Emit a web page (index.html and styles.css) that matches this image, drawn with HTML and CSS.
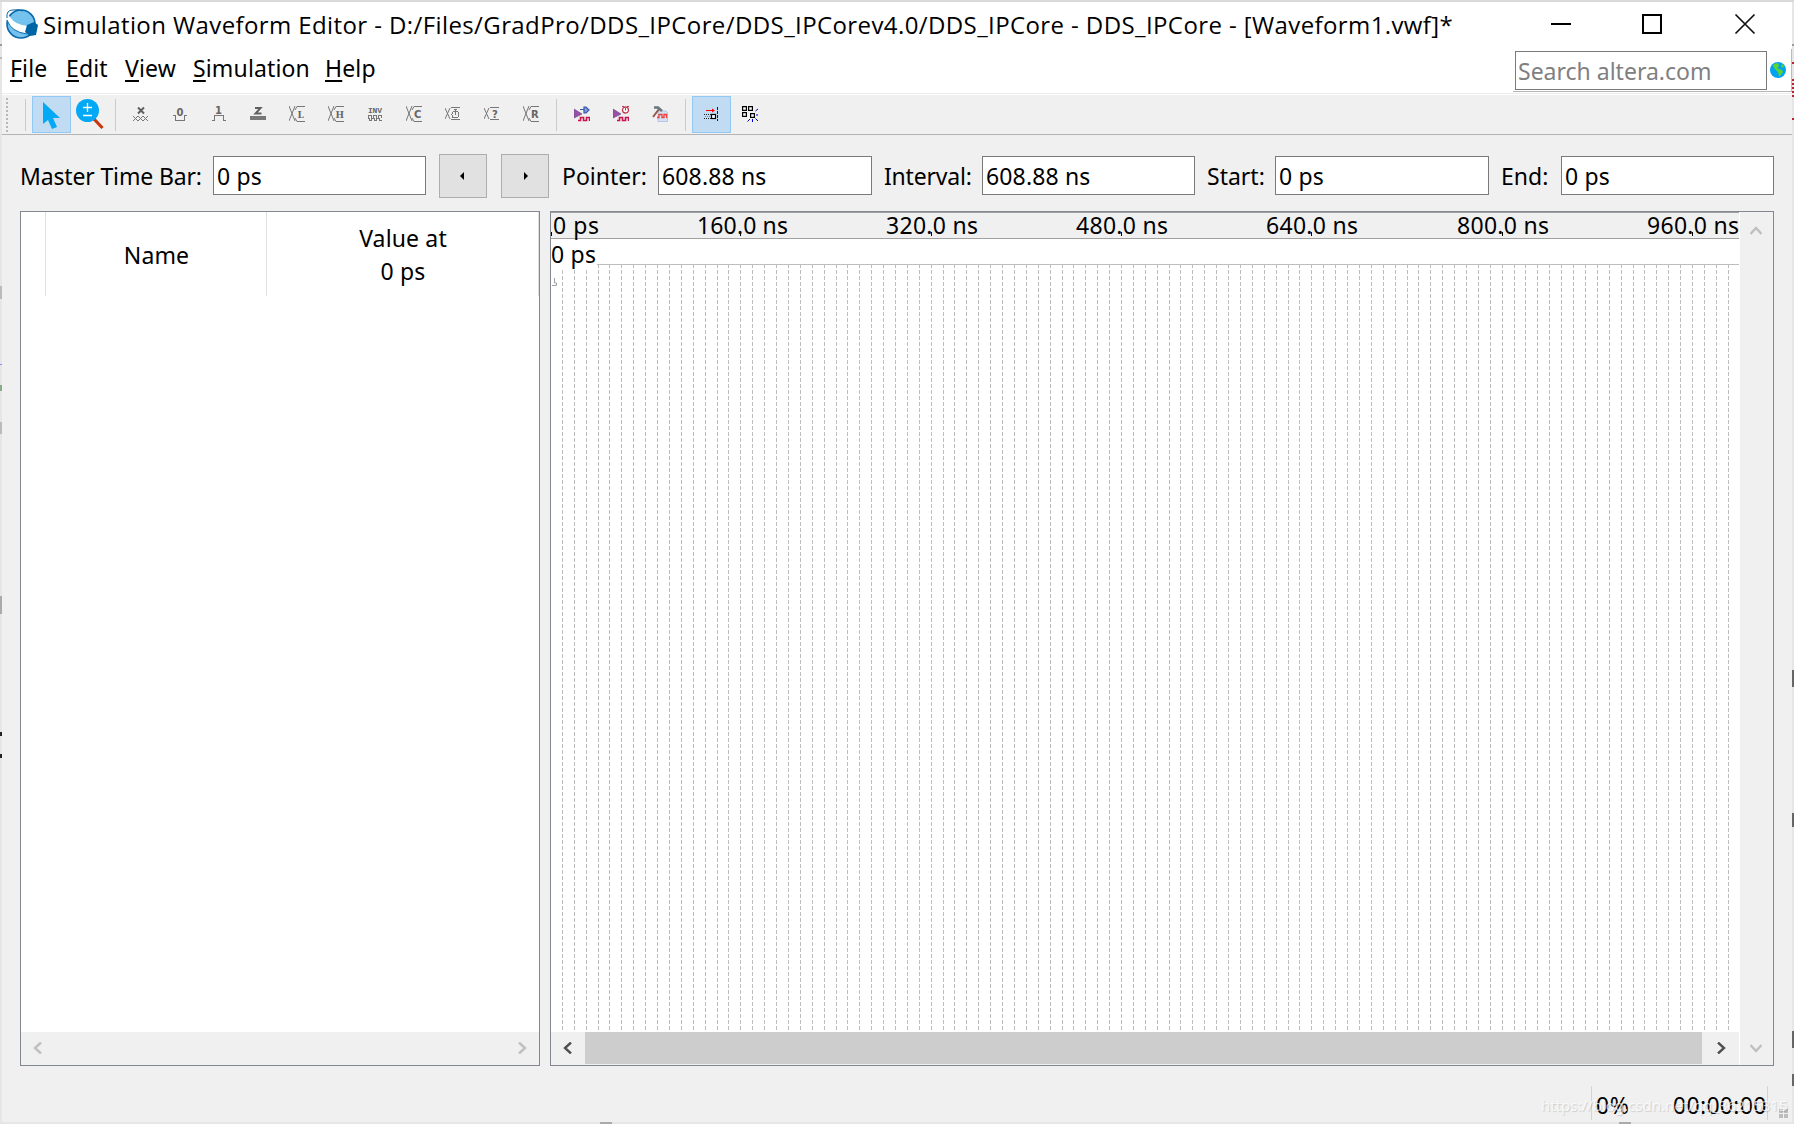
FILE: index.html
```
<!DOCTYPE html>
<html>
<head>
  <title>Simulation Waveform Editor</title>
  <meta charset="utf-8" />
  <link rel="stylesheet" href="styles.css">
</head>
<body>
  <div class="window">

    <div class="titlebar">
      <svg class="logo" width="34" height="32" viewBox="0 0 34 32">
        <circle cx="16" cy="16" r="14" fill="#74c3ee" stroke="#0a68a8" stroke-width="1.6"/>
        <path d="M4 3 Q2 6 5 9 Q10 17 23 18 L22 26 Q6 24 2 12 Q0 5 4 3Z" fill="#fff"/>
        <path d="M2 10 Q1 2 8 2 Q13 1 18 3" fill="none" stroke="#0a68a8" stroke-width="1"/>
        <path d="M2 12 Q6 24 22 26" fill="none" stroke="#0a68a8" stroke-width="1"/>
        <path d="M22 17 L29 14 L33 17 L31 27 L25 28 L20 24Z" fill="#0065a4"/>
      </svg>
      <span class="title">Simulation Waveform Editor - D:/Files/GradPro/DDS_IPCore/DDS_IPCorev4.0/DDS_IPCore - DDS_IPCore - [Waveform1.vwf]*</span>
      <svg class="controls" width="206" height="22" viewBox="0 0 206 22">
        <path d="M0 11H20" stroke="#000" stroke-width="2" shape-rendering="crispEdges"/>
        <rect x="92" y="2" width="18" height="18" fill="none" stroke="#000" stroke-width="2"/>
        <path d="M184.500 1.500L203.500 20.500M203.500 1.500L184.500 20.500" stroke="#111" stroke-width="1.700"/>
      </svg>
    </div>

    <div class="menubar">
      <span class="menu m-file"><u>F</u>ile</span>
      <span class="menu m-edit"><u>E</u>dit</span>
      <span class="menu m-view"><u>V</u>iew</span>
      <span class="menu m-sim"><u>S</u>imulation</span>
      <span class="menu m-help"><u>H</u>elp</span>
      <div class="search-area">
        <div class="search">Search altera.com</div>
        <svg width="16" height="16" viewBox="0 0 16 16">
          <circle cx="8" cy="8" r="8" fill="#03a2f0"/>
          <path d="M4 2L8 1L9 4L7 6L9 7L12 8L13 10L10 14L9 14L8 10L5 7L3 4Z" fill="#5bd62c"/>
          <path d="M12 2L14 4L13 6L11 4Z" fill="#5bd62c"/>
        </svg>
      </div>
    </div>

    <div class="toolbar">
      <div class="grip"></div>
      <div class="sep first"></div>
      <div class="tool active">
        <svg width="39" height="37" viewBox="0 0 39 37"><path d="M11 6L11 28L16 24L20 33L25 31L21 22L28 22Z" fill="#03a9f4"/></svg>
      </div>
      <div class="tool">
        <svg width="39" height="37" viewBox="0 0 39 37">
          <path d="M23 23L31.500 32" stroke="#c6380f" stroke-width="3.200"/>
          <circle cx="16.500" cy="14.500" r="11.500" fill="#03a9f4"/>
          <path d="M12 11.500H21M16.500 7V16M12 19.500H21" stroke="#fff" stroke-width="1.300"/>
        </svg>
      </div>
      <div class="sep"></div>
      <!-- waveform value tools -->
      <div class="tool"><svg class="icon" viewBox="0 0 16 16">
        <path d="M5 1.500L11 7.500M11 1.500L5 7.500" class="heavy"/><path d="M0 15L5 10L10 15L15 10M0 10L5 15L10 10L15 15" class="thin"/></svg></div>
      <div class="tool"><svg class="icon" viewBox="0 0 16 16">
        <text x="4.500" y="10" class="b">0</text><path d="M1 9.500H3.500V14.500H12.500V9.500H15" class="line"/></svg></div>
      <div class="tool"><svg class="icon" viewBox="0 0 16 16">
        <text x="4" y="8" class="b">1</text><path d="M1 14.500H3.500V9.500H12.500V14.500H15" class="line"/></svg></div>
      <div class="tool"><svg class="icon" viewBox="0 0 16 16">
        <path d="M5 2H10.500L5.500 7.500H11.500" class="heavy"/><path d="M0 12H16" stroke="#777" stroke-width="4"/></svg></div>
      <div class="tool"><svg class="icon" viewBox="0 0 16 16">
        <path d="M0 0L6 15M6 0L0 15M8 .5H16M6 4L8 .5M6 12L8 15.500H16" class="thin"/><text x="8.500" y="12" class="serif">L</text></svg></div>
      <div class="tool"><svg class="icon" viewBox="0 0 16 16">
        <path d="M0 0L6 15M6 0L0 15M8 .5H16M6 4L8 .5M6 12L8 15.500H16" class="thin"/><text x="7.500" y="12" class="serif">H</text></svg></div>
      <div class="tool"><svg class="icon" viewBox="0 0 16 16">
        <text x="1" y="7" class="inv" textLength="14">INV</text><path d="M1 12V9.500H4V12H6V9.500H9V12H11V9.500H14V12M1 12.500H2V14.500H4V12.500H7V14.500H9V12.500H12V14.500H15" class="line"/></svg></div>
      <div class="tool"><svg class="icon" viewBox="0 0 16 16">
        <path d="M0 0L6 15M6 0L0 15M8 .5H16M6 4L8 .5M6 12L8 15.500H16" class="thin"/><text x="8" y="12" class="b">C</text></svg></div>
      <div class="tool"><svg class="icon" viewBox="0 0 16 16">
        <path d="M0 2L5 13M5 2L0 13M6 1.500H15M6 13.500H15" class="thin"/><circle cx="10.500" cy="8.500" r="3.500" class="line"/><path d="M10.500 3V9M9 3.500H12" class="line"/></svg></div>
      <div class="tool"><svg class="icon" viewBox="0 0 16 16">
        <path d="M0 2L5 13M5 2L0 13M6 1.500H15M6 13.500H15" class="thin"/><text x="8" y="12" class="b">?</text></svg></div>
      <div class="tool"><svg class="icon" viewBox="0 0 16 16">
        <path d="M0 0L6 15M6 0L0 15M8 .5H16M6 4L8 .5M6 12L8 15.500H16" class="thin"/><text x="8" y="12" class="b">R</text></svg></div>
      <div class="sep"></div>
      <!-- simulation -->
      <div class="tool"><svg class="icon" viewBox="0 0 16 16">
        <path d="M0 3V12L8 8Z" fill="#9b4fa8" stroke="#69507c" stroke-width=".7"/>
        <path d="M6 3.500H10M10 1V7H12L15 4L12 1Z" fill="#7c9de0" stroke="#3654a8" stroke-width="1.200"/>
        <path d="M4 14.500H6.500V11.500H9.500V14.500H12.500V11.500H15.500V15" class="wave"/></svg></div>
      <div class="tool"><svg class="icon" viewBox="0 0 16 16">
        <path d="M0 3V12L8 8Z" fill="#9b4fa8" stroke="#69507c" stroke-width=".7"/>
        <circle cx="12.500" cy="4" r="3" fill="#fff" stroke="#c23a55" stroke-width="1.300"/><path d="M12.500 2V4.500M9 .5H11M14 .5H16" stroke="#c23a55"/>
        <path d="M4 14.500H6.500V11.500H9.500V14.500H12.500V11.500H15.500V15" class="wave"/></svg></div>
      <div class="tool"><svg class="icon" viewBox="0 0 16 16">
        <path d="M6 5H14L15.500 6.500V15.500H6Z" fill="#d4e0f4" stroke="#a9bbdc" stroke-width=".8"/>
        <path d="M1 11L7 3" stroke="#8f5a48" stroke-width="2"/><path d="M2 1.500H6L10 5" fill="none" stroke="#66757e" stroke-width="2.400"/>
        <path d="M5 11.500H7V8.500H10V11.500H12V8.500H14.500V12" fill="none" stroke="#f0403c" stroke-width="1.300"/></svg></div>
      <div class="sep"></div>
      <!-- snapping -->
      <div class="tool active"><svg class="icon" viewBox="0 0 16 16">
        <path d="M3 4.500H10" stroke="#f00"/><path d="M9 2.500L12 4.500L9 6.500Z" fill="#f00"/>
        <path d="M1 8.500H8M1 12.500H8" stroke="#222" stroke-dasharray="1 1"/><path d="M2 10.500H8" stroke="#888" stroke-dasharray="1 1"/>
        <rect x="8.500" y="8.500" width="4" height="4" fill="#fff" stroke="#000" stroke-width="1.200"/>
        <path d="M14.500 1V15" stroke="#00f" stroke-dasharray="3 1"/></svg></div>
      <div class="tool"><svg class="icon" viewBox="0 0 16 16">
        <path d="M.6 .6H4.400V4.400H.6ZM6.600 .6H10.400V4.400H6.600ZM.6 6.600H4.400V10.400H.6ZM8.600 7.600H12.400V11.400H8.600Z" fill="#fff" stroke="#000" stroke-width="1.200"/>
        <path d="M13.500 5L16 3M14 9H16M13.500 12.500L16 15M10.500 13V16M8 13L5.500 15.500" stroke="#00c"/></svg></div>
    </div>

    <div class="timebar">
      <span class="label l-master">Master Time Bar:</span>
      <div class="field">0 ps</div>
      <div class="step prev"><i></i></div>
      <div class="step next"><i></i></div>
      <span class="label l-pointer">Pointer:</span>
      <div class="field f-pointer">608.88 ns</div>
      <span class="label l-interval">Interval:</span>
      <div class="field">608.88 ns</div>
      <span class="label l-start">Start:</span>
      <div class="field f-start">0 ps</div>
      <span class="label l-end">End:</span>
      <div class="field">0 ps</div>
    </div>

    <div class="panels">
      <div class="names">
        <div class="names-head">
          <div class="col c-icon"></div>
          <div class="col c-name">Name</div>
          <div class="col c-value">Value at<br />0 ps</div>
        </div>
        <div class="names-body"></div>
        <div class="hscroll disabled">
          <svg width="9" height="12" viewBox="0 0 9 12"><path d="M8 .5L2 6L8 11.500"/></svg>
          <svg width="9" height="12" viewBox="0 0 9 12"><path d="M1 .5L7 6L1 11.500"/></svg>
        </div>
      </div>

      <div class="wave-panel">
        <div class="wave-main">
          <svg id="wave" width="1188" height="820"></svg>
          <div class="hscroll">
            <svg width="9" height="12" viewBox="0 0 9 12"><path d="M8 .5L2 6L8 11.500"/></svg>
            <div class="thumb"></div>
            <svg width="9" height="12" viewBox="0 0 9 12"><path d="M1 .5L7 6L1 11.500"/></svg>
          </div>
        </div>
        <div class="vscroll">
          <svg width="12" height="9" viewBox="0 0 12 9"><path d="M.5 8L6 2L11.500 8"/></svg>
          <svg width="12" height="9" viewBox="0 0 12 9"><path d="M.5 1L6 7L11.500 1"/></svg>
        </div>
      </div>
    </div>

    <div class="statusbar">
      <div class="progress">0%</div>
      <div class="elapsed">00:00:00</div>
      <div class="sizegrip"></div>
      <div class="watermark">https://blog.csdn.net/qq_36215315</div>
    </div>
  </div>

  <div class="edge edge-left"></div>
  <div class="edge edge-right"></div>
  <div class="edge edge-bottom"></div>

  <script src="wave.js"></script>
</body>
</html>
```
FILE: styles.css
```
* {
  box-sizing: border-box;
}

body {
  margin: 0;
  width: 1794px;
  height: 1124px;
  padding: 2px;
  overflow: hidden;
  position: relative;
  background: linear-gradient(#d9d9d9 2px, #e6e6e6 2px);
  font-family: "Noto Sans", "Open Sans", sans-serif;
  font-size: 23px;
  color: #000;
  white-space: nowrap;
}

.window {
  display: flex;
  flex-direction: column;
  width: 1790px;
  height: 1120px;
  background: #f0f0f0;
}

/* title */
.titlebar {
  display: flex;
  height: 46px;
  background: #fff;
}

.logo {
  margin: 6px 0 0 3px;
}

.title {
  width: 1508px;
  margin-left: 4px;
  font-family: "Open Sans", "Noto Sans", sans-serif;
  font-size: 24px;
  letter-spacing: 0.4px;
  line-height: 46px;
}

.controls {
  margin-top: 11px;
}

/* menu */
.menubar {
  display: flex;
  height: 46px;
  padding-left: 8px;
  background: #fff;
  border-bottom: 1px solid #ececec;
  line-height: 40px;
}

.menu {
  letter-spacing: 0.15px;
}

.menu u {
  text-decoration-thickness: 2px;
  text-underline-offset: 3px;
  text-decoration-skip-ink: none;
}

.m-file { width: 56px; }
.m-edit { width: 59px; }
.m-view { width: 68px; }
.m-sim { width: 132px; }

.search-area {
  display: flex;
  align-items: center;
  width: 279px;
  height: 43px;
  margin-left: auto;
  margin-top: 1px;
  padding-left: 2px;
  gap: 3px;
  border-right: 1px solid #bbb;
  border-bottom: 1px solid #b5b5b5;
}

.search {
  width: 252px;
  height: 39px;
  padding-left: 2px;
  border: 1px solid #7a7a7a;
  color: #808080;
  line-height: 39px;
}

/* toolbar */
.toolbar {
  display: flex;
  height: 41px;
  padding-top: 1px;
  border-top: 1px solid #fff;
  border-bottom: 1px solid #b4b4b4;
}

.grip {
  width: 2px;
  height: 35px;
  margin: 2px 0 0 4px;
  background: repeating-linear-gradient(#b8b8b8 0 2px, #f0f0f0 2px 4px);
}

.sep {
  width: 1px;
  height: 32px;
  margin: 3px 6px 0 5px;
  background: #cbcbcb;
}

.first {
  margin-left: 17px;
}

.tool {
  display: flex;
  align-items: center;
  justify-content: center;
  width: 39px;
  height: 37px;
}

.tool.active {
  background: #c1dcf2;
  box-shadow: inset 0 0 0 1px #90c8f6;
}

.icon {
  width: 16px;
  height: 16px;
  margin: 0 1px 1px 0;
  fill: #666;
}

.icon .thin,
.icon .line {
  fill: none;
  stroke: #777;
  stroke-width: 1;
}

.icon .line {
  shape-rendering: crispEdges;
}

.icon .heavy {
  fill: none;
  stroke: #606060;
  stroke-width: 2;
}

.icon .wave {
  fill: none;
  stroke: #c8154f;
  stroke-width: 1.6;
}

.icon .b {
  font: bold 10px "DejaVu Sans", sans-serif;
}

.icon .serif {
  font: bold 9px "DejaVu Serif", serif;
}

.icon .inv {
  font: bold 8px "Liberation Mono", monospace;
}

/* time bar */
.timebar {
  display: flex;
  align-items: flex-start;
  height: 76px;
  padding: 21px 18px 0 18px;
}

.label {
  padding-left: 12px;
  line-height: 40px;
}

.l-master {
  width: 193px;
  padding-left: 0;
  letter-spacing: -0.15px;
}

.l-pointer {
  width: 109px;
  padding-left: 13px;
}

.l-interval {
  width: 110px;
  letter-spacing: -0.2px;
}

.l-start { width: 80px; }
.l-end { width: 72px; }

.field {
  width: 213px;
  height: 39px;
  padding-left: 3px;
  border: 1px solid #7a7a7a;
  background: #fff;
  line-height: 39px;
  letter-spacing: 0.15px;
}

.f-pointer,
.f-start {
  width: 214px;
}

.step {
  display: flex;
  align-items: center;
  justify-content: center;
  width: 48px;
  height: 44px;
  margin: -2px 0 0 13px;
  border: 1px solid #adadad;
  background: #e1e1e1;
}

.next {
  margin-left: 14px;
}

.step i {
  border: 4px solid transparent;
}

.prev i {
  border-left-width: 0;
  border-right-color: #000;
  margin-right: 2px;
}

.next i {
  border-right-width: 0;
  border-left-color: #000;
  margin-left: 2px;
}

/* panels */
.panels {
  display: flex;
  gap: 10px;
  height: 855px;
  padding: 0 18px;
}

.names {
  display: flex;
  flex-direction: column;
  width: 520px;
  border: 1px solid #828790;
  background: #fff;
}

.names-head {
  display: flex;
  height: 84px;
}

.col {
  display: flex;
  align-items: center;
  justify-content: center;
  padding: 2px 0 0 1px;
  border-right: 1px solid #e0e0e0;
  text-align: center;
  line-height: 33px;
  letter-spacing: 0.15px;
}

.c-icon { width: 25px; }
.c-name { width: 221px; }
.c-value { width: 272px; }

.names-body {
  flex: 1;
}

.hscroll {
  display: flex;
  align-items: center;
  height: 33px;
  padding: 0 12px 1px;
  background: #f0f0f0;
}

.hscroll path,
.vscroll path {
  fill: none;
  stroke: #505050;
  stroke-width: 2.4;
}

.disabled {
  justify-content: space-between;
}

.disabled path,
.vscroll path {
  stroke: #bfbfbf;
}

.thumb {
  width: 1117px;
  height: 32px;
  margin: 0 15px 0 13px;
  background: #cdcdcd;
}

.wave-panel {
  display: flex;
  width: 1224px;
  border: 1px solid #828790;
  background: #fff;
}

.wave-main {
  width: 1188px;
}

#wave {
  display: block;
}

.wave-grid {
  stroke: #bdbdbd;
  stroke-dasharray: 4 2;
  shape-rendering: crispEdges;
}

.vscroll {
  display: flex;
  flex: 1;
  flex-direction: column;
  align-items: center;
  justify-content: space-between;
  margin-left: 1px;
  padding: 14px 1px 12px 0;
  background: #f0f0f0;
}

/* status */
.statusbar {
  display: flex;
  position: relative;
  height: 34px;
  margin-top: 20px;
  padding-left: 1589px;
  line-height: 38px;
}

.progress {
  width: 76px;
  padding-left: 4px;
  border-left: 1px solid #d4d4d4;
  letter-spacing: 0.6px;
}

.elapsed {
  width: 101px;
  padding-left: 6px;
  border-right: 1px solid #d4d4d4;
  letter-spacing: 0.3px;
}

.sizegrip {
  width: 9px;
  height: 9px;
  margin: 23px 0 0 11px;
  background:
    linear-gradient(#f0f0f0, #f0f0f0) 4px 0 / 1px 9px no-repeat,
    linear-gradient(#f0f0f0, #f0f0f0) 0 4px / 9px 1px no-repeat,
    #bdbdbd;
}

.watermark {
  position: absolute;
  left: 1539px;
  top: 0;
  font-size: 15px;
  color: rgba(255, 255, 255, 0.75);
  text-shadow: 1px 1px 1px rgba(0, 0, 0, 0.15);
}

/* what shows round the window */
.edge {
  position: absolute;
}

.edge-left {
  left: 0;
  top: 0;
  width: 2px;
  height: 1124px;
  background:
    linear-gradient(#999, #999) 0 44px / 2px 2px no-repeat,
    linear-gradient(#bbb, #bbb) 0 57px / 2px 2px no-repeat,
    linear-gradient(#bbb, #bbb) 0 286px / 2px 13px no-repeat,
    linear-gradient(#88f, #88f) 0 364px / 2px 1px no-repeat,
    linear-gradient(#8a8, #8a8) 0 385px / 2px 6px no-repeat,
    linear-gradient(#bbb, #bbb) 0 422px / 2px 12px no-repeat,
    linear-gradient(#aaa, #aaa) 0 596px / 2px 18px no-repeat,
    linear-gradient(#222, #222) 0 732px / 2px 4px no-repeat,
    linear-gradient(#222, #222) 0 754px / 2px 4px no-repeat;
}

.edge-right {
  right: 0;
  top: 0;
  width: 2px;
  height: 1124px;
  background:
    linear-gradient(#999, #999) 0 44px / 2px 2px no-repeat,
    linear-gradient(#c02030, #c02030) 0 62px / 2px 2px no-repeat,
    repeating-linear-gradient(#c02030 0 2px, #e6e6e6 2px 4px) 0 79px / 2px 19px no-repeat,
    linear-gradient(#c02030, #c02030) 0 118px / 2px 2px no-repeat,
    linear-gradient(#666, #666) 0 670px / 2px 17px no-repeat,
    linear-gradient(#666, #666) 0 813px / 2px 14px no-repeat,
    linear-gradient(#666, #666) 0 1031px / 2px 17px no-repeat,
    linear-gradient(#666, #666) 0 1074px / 2px 12px no-repeat;
}

.edge-bottom {
  left: 0;
  bottom: 0;
  width: 1794px;
  height: 2px;
  background:
    linear-gradient(#aaa, #aaa) 600px 0 / 12px 2px no-repeat,
    linear-gradient(#aaa, #aaa) 1619px 0 / 12px 2px no-repeat;
}
```
FILE: wave.js
```
const svg = document.getElementById('wave');
const STEP = 11.896; // 10 ns

function add(name, attrs, text) {
  const el = document.createElementNS('http://www.w3.org/2000/svg', name);
  for (const key in attrs) el.setAttribute(key, attrs[key]);
  if (text) el.textContent = text;
  svg.appendChild(el);
}

// ruler
add('rect', { x: 0, y: 0, width: 1188, height: 26, fill: '#f0f0f0' });
add('rect', { x: 0, y: 0, width: 1188, height: 1, fill: '#a0a0a0' });
add('rect', { x: 0, y: 26, width: 1188, height: 1, fill: '#a0a0a0' });
add('rect', { x: 0, y: 52, width: 1188, height: 1, fill: '#bdbdbd' });

// grid
for (let i = 1; i <= 99; i++) {
  const x = Math.round(i * STEP) - 0.5;
  add('line', { x1: x, x2: x, y1: i < 4 ? 58 : 52, y2: 819, class: 'wave-grid' });
}

// labels
const labels = [
  ['0 ps', 2, 46], ['160.0 ns', 146, 91], ['320.0 ns', 335, 92], ['480.0 ns', 525, 92],
  ['640.0 ns', 715, 92], ['800.0 ns', 906, 92], ['960.0 ns', 1096, 92]
];
labels.forEach(([text, x, width], i) => {
  add('text', { x: x, y: 22, textLength: width }, text);
  add('rect', { x: Math.round(i * STEP * 16) - (i ? 1 : 0), y: 20, width: 1, height: 4 });
});

add('rect', { x: 0, y: 30, width: 46, height: 26, fill: '#fff' });
add('text', { x: 0, y: 51, textLength: 45 }, '0 ps');
add('path', { d: 'M3.5 66V71H5.500V73.500H1', fill: 'none', stroke: '#a0a0a0' });
```
